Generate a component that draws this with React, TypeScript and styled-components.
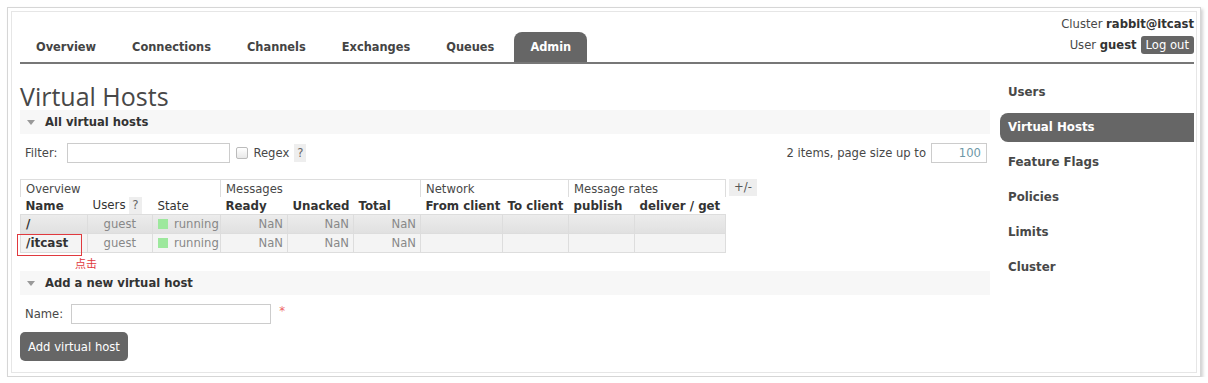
import styled, { createGlobalStyle } from "styled-components";

const GlobalStyle = createGlobalStyle`
  body {
    margin: 0;
    background: #fff;
    font-family: "DejaVu Sans", Verdana, sans-serif;
    font-size: 11.6px;
    color: #484848;
  }
`;

const Page = styled.div`
  padding: 7px 0 0 7px;
`;

const OuterFrame = styled.div`
  width: 1194px;
  height: 370px;
  box-sizing: border-box;
  border: 1px solid #d6d6d6;
  box-shadow: 2px 2px 3px rgba(0, 0, 0, 0.18);
  padding: 3px;
`;

const InnerFrame = styled.div`
  height: 100%;
  box-sizing: border-box;
  border: 1px solid #e6e6e6;
  padding: 0 2px 0 8px;
`;

const Header = styled.header`
  display: flex;
  justify-content: space-between;
  align-items: flex-end;
  height: 50px;
  border-bottom: 2px solid #777;
`;

const Tabs = styled.nav`
  display: flex;
  align-items: flex-end;
`;

const Tab = styled.div<{ $active?: boolean }>`
  height: 30px;
  line-height: 30px;
  padding: 0 16px;
  margin-right: 4px;
  font-weight: bold;
  font-size: 11.4px;
  color: ${({ $active }) => ($active ? "#fff" : "#444")};
  background: ${({ $active }) => ($active ? "#666" : "transparent")};
  border-radius: 8px 8px 0 0;
`;

const Login = styled.div`
  display: flex;
  flex-direction: column;
  align-items: flex-end;
  gap: 4px;
  padding-bottom: 8px;
`;

const LoginLine = styled.div`
  display: flex;
  align-items: center;
  gap: 4px;
  line-height: 16px;

  b {
    color: #333;
  }
`;

const SmallButton = styled.span`
  display: inline-block;
  background: #666;
  color: #fff;
  border-radius: 3px;
  padding: 0 5px;
  line-height: 18px;
`;

const Body = styled.div`
  display: flex;
  gap: 10px;
`;

const Main = styled.main`
  flex: 0 0 970px;
  padding-top: 18px;
`;

const Title = styled.h1`
  margin: 0;
  font-family: "Open Sans", "Liberation Sans", sans-serif;
  font-weight: normal;
  font-size: 25px;
  line-height: 28px;
  color: #484848;
`;

const SectionBar = styled.div<{ $gap?: number }>`
  display: flex;
  align-items: center;
  gap: 10px;
  height: 24px;
  padding-left: 7px;
  margin-top: ${({ $gap }) => $gap ?? 0}px;
  background: #f7f7f7;
  font-weight: bold;
  font-size: 11.6px;
  color: #333;
`;

const Arrow = styled.span`
  width: 0;
  height: 0;
  border-left: 4px solid transparent;
  border-right: 4px solid transparent;
  border-top: 5px solid #999;
`;

const Row = styled.div<{ $gap: number }>`
  display: flex;
  align-items: center;
  justify-content: space-between;
  height: 21px;
  margin-top: ${({ $gap }) => $gap}px;
  padding: 0 3px 0 5px;
`;

const Group = styled.div`
  display: flex;
  align-items: center;
  gap: 5px;
`;

const Label = styled.span<{ $mr?: number }>`
  margin-right: ${({ $mr }) => $mr ?? 3}px;
`;

const TextInput = styled.div<{ $w: number }>`
  width: ${({ $w }) => $w}px;
  height: 20px;
  box-sizing: border-box;
  border: 1px solid #ccc;
  background: #fff;
  padding: 0 5px;
  text-align: right;
  line-height: 18px;
  color: #6d97a6;
`;

const Checkbox = styled.span`
  width: 10px;
  height: 10px;
  border: 1px solid #bbb;
  border-radius: 2px;
  background: linear-gradient(#fff, #e8e8e8);
  margin-left: 1px;
`;

const Help = styled.span<{ $h?: number }>`
  display: inline-block;
  background: #eee;
  padding: 0 3px;
  line-height: ${({ $h }) => $h ?? 18}px;
  color: #666;
`;

const TableWrap = styled.div`
  position: relative;
  display: flex;
  gap: 3px;
  margin-top: 16px;
`;

const Table = styled.table`
  border-collapse: collapse;
  table-layout: fixed;
  width: 705px;
`;

const GroupTh = styled.th`
  height: 17px;
  padding: 0 5px;
  text-align: left;
  font-weight: normal;
  border: 1px solid #ddd;
  border-bottom: none;
`;

const ColTh = styled.th<{ $pad?: boolean }>`
  height: 17px;
  padding: 0 ${({ $pad }) => ($pad ? 0 : 5)}px 0 5px;
  text-align: left;
  font-weight: ${({ $pad }) => ($pad ? "normal" : "bold")};
  font-size: 11.8px;
  color: #333;
  border-bottom: 1px solid #ddd;
  white-space: nowrap;
`;

const Tr = styled.tr<{ $alt?: boolean }>`
  background: ${({ $alt }) =>
    $alt ? "#f4f4f4" : "linear-gradient(#ececec, #e0e0e0)"};
`;

const Td = styled.td<{ $align?: "left" | "right"; $pr?: number }>`
  height: 18px;
  padding: 0 ${({ $pr }) => $pr ?? 4}px 0 5px;
  border: 1px solid #ddd;
  text-align: ${({ $align }) => $align ?? "right"};
  color: #888;
  white-space: nowrap;
`;

const NameTd = styled(Td)`
  font-weight: bold;
  color: #333;
  font-size: 12px;
`;

const Swatch = styled.span`
  display: inline-block;
  width: 10px;
  height: 10px;
  background: #9de89d;
  margin-right: 6px;
  vertical-align: -1px;
`;

const ColumnsToggle = styled.span`
  align-self: flex-start;
  background: #eee;
  padding: 0 5px;
  line-height: 17px;
  color: #555;
`;

const Highlight = styled.div`
  position: absolute;
  left: -3px;
  top: 55px;
  width: 65px;
  height: 22px;
  box-sizing: border-box;
  border: 1px solid #e0393e;
`;

const Note = styled.span`
  position: absolute;
  left: 55px;
  top: 78px;
  font-family: "Noto Sans CJK SC", sans-serif;
  font-size: 11px;
  line-height: 13px;
  color: #e0393e;
`;

const Required = styled.span`
  color: #e66;
  margin-left: 3px;
  align-self: flex-start;
  line-height: 14px;
`;

const PrimaryButton = styled.button`
  margin-top: 8px;
  height: 29px;
  padding: 0 8px;
  border: none;
  border-radius: 5px;
  background: #666;
  color: #fff;
  font-family: "DejaVu Sans", Verdana, sans-serif;
  font-size: 11.6px;
`;

const Sidebar = styled.aside`
  flex: 1;
  padding-top: 14px;
`;

const SideItem = styled.div<{ $active?: boolean }>`
  height: 29px;
  line-height: 29px;
  margin-bottom: 6px;
  padding-left: 8px;
  font-weight: bold;
  font-size: 11.8px;
  color: ${({ $active }) => ($active ? "#fff" : "#484848")};
  background: ${({ $active }) => ($active ? "#666" : "transparent")};
  border-radius: 8px 0 0 8px;
`;

const tabs = ["Overview", "Connections", "Channels", "Exchanges", "Queues", "Admin"];
const sideItems = ["Users", "Virtual Hosts", "Feature Flags", "Policies", "Limits", "Cluster"];
const colWidths = [67, 65, 68, 67, 66, 67, 82, 66, 66, 91];
const vhosts = ["/", "/itcast"];

export default function App() {
  return (
    <Page>
      <GlobalStyle />
      <OuterFrame>
        <InnerFrame>
          <Header>
            <Tabs>
              {tabs.map((t) => (
                <Tab key={t} $active={t === "Admin"}>
                  {t}
                </Tab>
              ))}
            </Tabs>
            <Login>
              <LoginLine>
                <span>
                  Cluster <b>rabbit@itcast</b>
                </span>
              </LoginLine>
              <LoginLine>
                <span>
                  User <b>guest</b>
                </span>
                <SmallButton>Log out</SmallButton>
              </LoginLine>
            </Login>
          </Header>
          <Body>
            <Main>
              <Title>Virtual Hosts</Title>
              <SectionBar>
                <Arrow />
                All virtual hosts
              </SectionBar>
              <Row $gap={8}>
                <Group>
                  <Label $mr={5}>Filter:</Label>
                  <TextInput $w={163} />
                  <Checkbox />
                  <span>Regex</span>
                  <Help>?</Help>
                </Group>
                <Group>
                  <span>2 items, page size up to</span>
                  <TextInput $w={56}>100</TextInput>
                </Group>
              </Row>
              <TableWrap>
                <Table>
                  <colgroup>
                    {colWidths.map((w, i) => (
                      <col key={i} style={{ width: w }} />
                    ))}
                  </colgroup>
                  <thead>
                    <tr>
                      <GroupTh colSpan={3}>Overview</GroupTh>
                      <GroupTh colSpan={3}>Messages</GroupTh>
                      <GroupTh colSpan={2}>Network</GroupTh>
                      <GroupTh colSpan={2}>Message rates</GroupTh>
                    </tr>
                    <tr>
                      <ColTh>Name</ColTh>
                      <ColTh $pad>
                        Users <Help $h={17}>?</Help>
                      </ColTh>
                      <ColTh $pad>State</ColTh>
                      <ColTh>Ready</ColTh>
                      <ColTh>Unacked</ColTh>
                      <ColTh>Total</ColTh>
                      <ColTh>From client</ColTh>
                      <ColTh>To client</ColTh>
                      <ColTh>publish</ColTh>
                      <ColTh>deliver / get</ColTh>
                    </tr>
                  </thead>
                  <tbody>
                    {vhosts.map((v, i) => (
                      <Tr key={v} $alt={i % 2 === 1}>
                        <NameTd $align="left">{v}</NameTd>
                        <Td $pr={16}>guest</Td>
                        <Td $align="left">
                          <Swatch />
                          running
                        </Td>
                        <Td>NaN</Td>
                        <Td>NaN</Td>
                        <Td>NaN</Td>
                        <Td />
                        <Td />
                        <Td />
                        <Td />
                      </Tr>
                    ))}
                  </tbody>
                </Table>
                <ColumnsToggle>+/-</ColumnsToggle>
                <Highlight />
                <Note>点击</Note>
              </TableWrap>
              <SectionBar $gap={18}>
                <Arrow />
                Add a new virtual host
              </SectionBar>
              <Row $gap={8}>
                <Group>
                  <Label>Name:</Label>
                  <TextInput $w={200} />
                  <Required>*</Required>
                </Group>
              </Row>
              <PrimaryButton>Add virtual host</PrimaryButton>
            </Main>
            <Sidebar>
              {sideItems.map((s) => (
                <SideItem key={s} $active={s === "Virtual Hosts"}>
                  {s}
                </SideItem>
              ))}
            </Sidebar>
          </Body>
        </InnerFrame>
      </OuterFrame>
    </Page>
  );
}
